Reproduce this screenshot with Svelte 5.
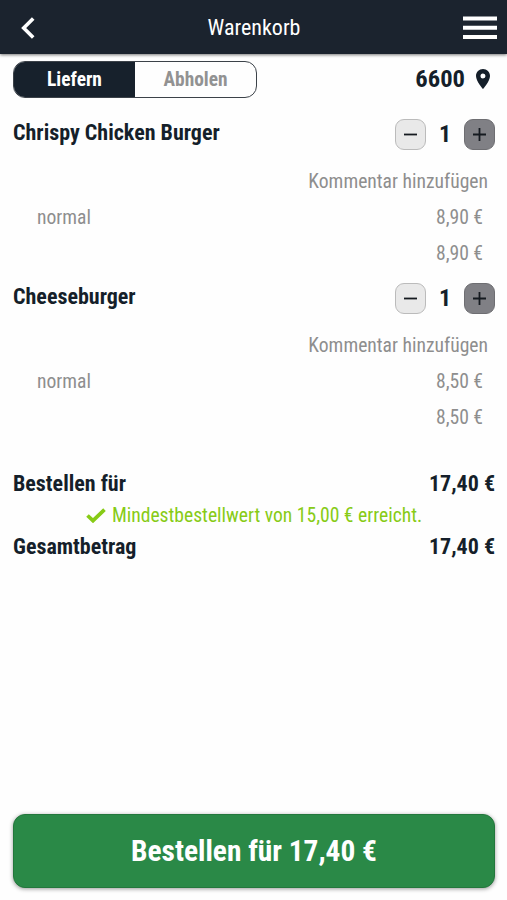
<script>
  let mode = $state('delivery')

  let items = $state([
    { name: 'Chrispy Chicken Burger', option: 'normal', price: 8.9, count: 1 },
    { name: 'Cheeseburger', option: 'normal', price: 8.5, count: 1 }
  ])

  const minimum = 15

  let total = $derived(items.reduce((sum, item) => sum + item.price * item.count, 0))

  function euro(value) {
    return value.toFixed(2).replace('.', ',') + ' €'
  }

  function decrease(item) {
    if (item.count > 1) item.count -= 1
  }
</script>

<div class="page">
  <header>
    <button class="icon" aria-label="Zurück">
      <svg width="14" height="22" viewBox="0 0 14 22">
        <path d="M12.2 1.5 2.7 11l9.5 9.5" fill="none" stroke="#fff" stroke-width="3.6" />
      </svg>
    </button>
    <h1>Warenkorb</h1>
    <button class="icon" aria-label="Menü">
      <svg width="34" height="24" viewBox="0 0 34 24">
        <path d="M0 2.5h34M0 11.7h34M0 21h34" stroke="#fff" stroke-width="4" />
      </svg>
    </button>
  </header>

  <div class="top">
    <div class="toggle">
      <button class:active={mode === 'delivery'} onclick={() => (mode = 'delivery')}>Liefern</button>
      <button class:active={mode === 'pickup'} onclick={() => (mode = 'pickup')}>Abholen</button>
    </div>
    <div class="zip">
      <span>6600</span>
      <svg width="14" height="20" viewBox="0 0 14 20">
        <path
          d="M7 0C3.1 0 0 3.1 0 7c0 5.2 7 13 7 13s7-7.8 7-13c0-3.9-3.1-7-7-7zm0 9.5a2.5 2.5 0 1 1 0-5 2.5 2.5 0 0 1 0 5z"
          fill="#151f2a"
        />
      </svg>
    </div>
  </div>

  <main>
    {#each items as item}
      <section class="item">
        <div class="head">
          <h2>{item.name}</h2>
          <div class="stepper">
            <button class="minus" aria-label="Weniger" onclick={() => decrease(item)}>
              <svg width="15" height="15" viewBox="0 0 15 15">
                <path d="M1 7.5h13" stroke="#151a20" stroke-width="1.8" />
              </svg>
            </button>
            <span>{item.count}</span>
            <button class="plus" aria-label="Mehr" onclick={() => (item.count += 1)}>
              <svg width="15" height="15" viewBox="0 0 15 15">
                <path d="M1 7.5h13M7.5 1v13" stroke="#151a20" stroke-width="1.8" />
              </svg>
            </button>
          </div>
        </div>
        <div class="comment">Kommentar hinzufügen</div>
        <div class="line">
          <span>{item.option}</span>
          <span>{euro(item.price)}</span>
        </div>
        <div class="line sum">{euro(item.price * item.count)}</div>
      </section>
    {/each}

    <section class="totals">
      <div class="total">
        <span>Bestellen für</span>
        <span>{euro(total)}</span>
      </div>
      {#if total >= minimum}
        <div class="reached">
          <svg width="20" height="15" viewBox="0 0 20 15">
            <path d="M1.5 7.5 7 12.7 18.5 1.7" fill="none" stroke="#87cb16" stroke-width="3.7" />
          </svg>
          <span>Mindestbestellwert von {euro(minimum)} erreicht.</span>
        </div>
      {/if}
      <div class="total">
        <span>Gesamtbetrag</span>
        <span>{euro(total)}</span>
      </div>
    </section>
  </main>

  <footer>
    <button class="order">Bestellen für {euro(total)}</button>
  </footer>
</div>

<style>
  :global(body) {
    background: #fefefe;
  }

  .page {
    display: flex;
    flex-direction: column;
    box-sizing: border-box;
    height: 900px;
    font-family: 'Roboto Condensed', Roboto, sans-serif;
    font-stretch: 75%;
    color: #151f2a;
  }

  button {
    padding: 0;
    border: 0;
    background: none;
    font: inherit;
    color: inherit;
    display: flex;
    align-items: center;
    justify-content: center;
  }

  svg {
    display: block;
  }

  h1,
  h2 {
    margin: 0;
  }

  header {
    display: grid;
    grid-template-columns: 34px 1fr 34px;
    align-items: center;
    height: 54px;
    padding: 2px 10px 0 21px;
    box-sizing: border-box;
    background: #1b232e;
    box-shadow: 0 1px 3px #0008;
  }

  header .icon {
    justify-content: flex-start;
  }

  h1 {
    color: #fff;
    font-size: 22px;
    font-weight: 400;
    line-height: 24px;
    text-align: center;
    padding: 0 10px 1px 0;
  }

  .top {
    display: flex;
    justify-content: space-between;
    align-items: center;
    height: 50px;
    padding: 0 17px 0 13px;
  }

  .toggle {
    display: grid;
    grid-template-columns: 1fr 1fr;
    box-sizing: border-box;
    width: 244px;
    height: 37px;
    border: 1px solid #3c4249;
    border-radius: 12px;
    overflow: hidden;
    font-size: 19.4px;
    font-weight: 700;
    color: #929292;
  }

  .toggle .active {
    background: #17212c;
    color: #fff;
  }

  .zip {
    display: flex;
    align-items: center;
    gap: 11px;
    font-size: 24.6px;
    font-weight: 700;
  }

  .zip span {
    padding-bottom: 2px;
  }

  main {
    flex: 1;
    padding: 10px 12px 0 13px;
  }

  .item {
    margin-bottom: 7px;
  }

  .head {
    display: flex;
    justify-content: space-between;
    align-items: center;
    height: 40px;
    margin-bottom: 9px;
  }

  h2 {
    font-size: 22px;
    font-weight: 700;
    padding-bottom: 4px;
  }

  .stepper {
    display: flex;
    align-items: center;
    font-size: 24px;
    font-weight: 700;
  }

  .stepper span {
    width: 38px;
    text-align: center;
  }

  .stepper button {
    box-sizing: border-box;
    width: 31px;
    height: 31px;
    border: 1px solid #bbb;
    border-radius: 9px;
    background: #e9e9e9;
  }

  .stepper .plus {
    border-color: #6e6e72;
    background: #808085;
  }

  .comment,
  .line {
    height: 36px;
    line-height: 38px;
    font-size: 19.6px;
    color: #8e8e8e;
    text-align: right;
    padding-right: 7px;
  }

  .line {
    display: flex;
    justify-content: space-between;
    padding: 0 12px 0 24px;
  }

  .sum {
    justify-content: flex-end;
  }

  .totals {
    padding-top: 26px;
  }

  .total {
    display: flex;
    justify-content: space-between;
    font-size: 22px;
    font-weight: 700;
    line-height: 31px;
  }

  .reached {
    display: flex;
    align-items: center;
    justify-content: center;
    gap: 6px;
    height: 32px;
    font-size: 19.6px;
    color: #87cb16;
  }

  footer {
    padding: 0 12px 12px 13px;
  }

  .order {
    box-sizing: border-box;
    width: 100%;
    height: 74px;
    border: 1px solid #23773c;
    border-radius: 12px;
    background: #2a8947;
    box-shadow: 0 1px 4px #0006;
    color: #fff;
    font-size: 29.4px;
    font-weight: 700;
  }
</style>
